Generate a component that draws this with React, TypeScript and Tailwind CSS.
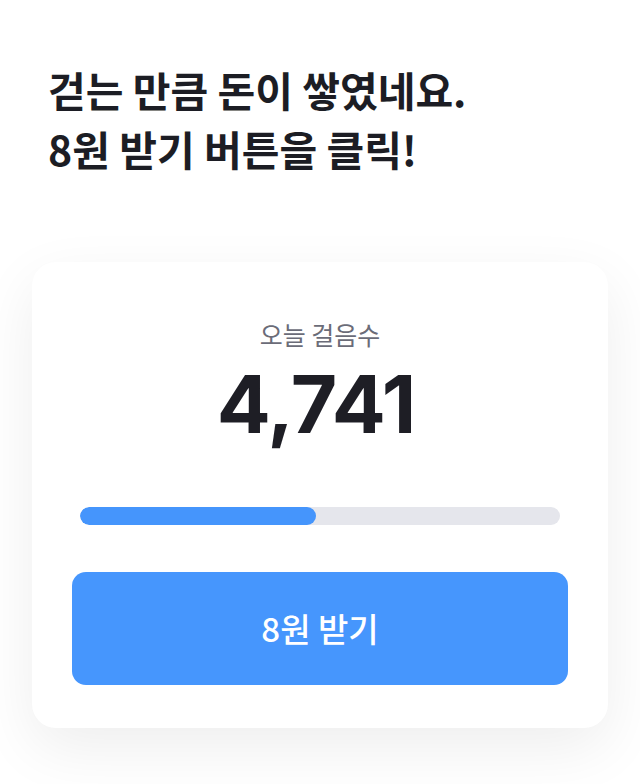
import React from 'react';

const KR = "font-['Noto_Sans_CJK_KR','Noto_Sans',sans-serif]";

const steps = 4741;
const progress = 49.2; // percent of today's goal

export default function App() {
  return (
    <div className={`min-h-screen bg-white ${KR} overflow-hidden`}>
      <div className="px-12 pt-[60px]">
        <h1 className="text-[41px] leading-[59px] font-bold text-[#1c1d24]">
          걷는 만큼 돈이 쌓였네요.
          <br />
          8원 받기 버튼을 클릭!
        </h1>
      </div>

      <div className="mx-8 mt-[84px] rounded-[24px] bg-white shadow-[0_20px_60px_rgba(0,0,0,0.07)] px-10 pt-[56px] pb-[43px]">
        <div className="flex flex-col items-center">
          <p className="text-[25px] leading-[32px] text-[#6b6c78]">오늘 걸음수</p>
          <p className="mt-[14px] pr-2 font-['Inter',sans-serif] text-[80px] leading-[80px] font-bold text-[#1e1e25] tracking-[-1px]">
            {steps.toLocaleString('en-US')}
          </p>
        </div>

        <div className="mx-2 mt-[63px] h-[18px] rounded-full bg-[#e5e6ec] overflow-hidden">
          <div className="h-full rounded-full bg-[#4595fc]" style={{ width: `${progress}%` }} />
        </div>

        <button className="mt-[47px] w-full h-[113px] rounded-[14px] bg-[#4696fd] text-white text-[33px] font-medium">
          8원 받기
        </button>
      </div>
    </div>
  );
}
